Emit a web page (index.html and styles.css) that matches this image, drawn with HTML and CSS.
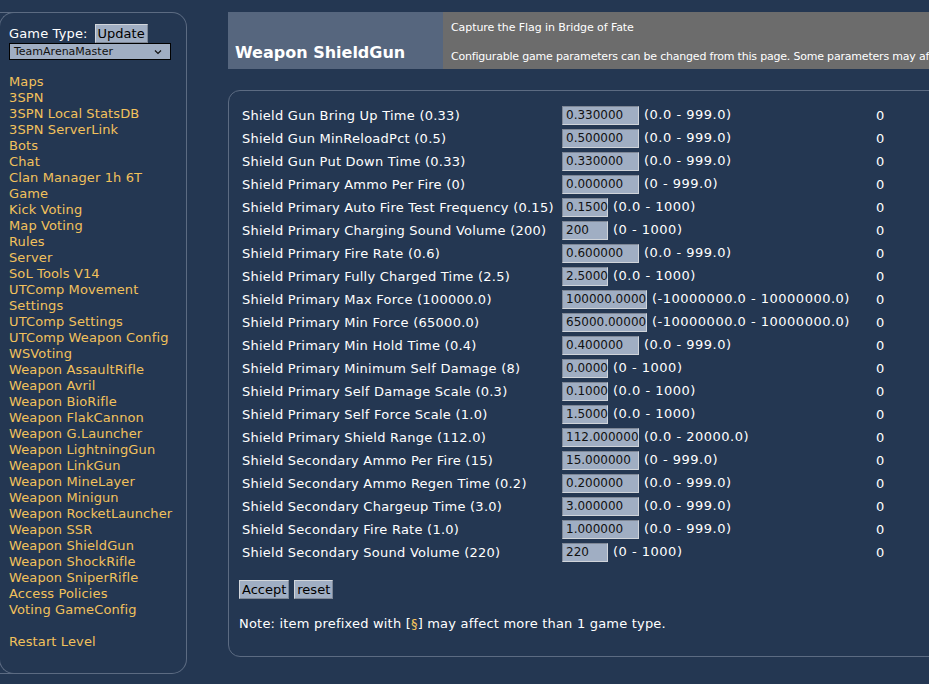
FILE: index.html
```html
<!DOCTYPE html>
<html>
<head>
<meta charset="utf-8">
<link rel="stylesheet" href="styles.css">
</head>
<body>
<div class="page">
  <aside class="sidebar">
    <div class="gt-row"><span class="gt-label">Game Type:</span><button class="btn">Update</button></div>
    <div class="select"><span>TeamArenaMaster</span><svg width="8" height="6" viewBox="0 0 8 6"><path d="M1 1.5 L4 4.5 L7 1.5" fill="none" stroke="#111" stroke-width="1.2"/></svg></div>
    <ul class="nav">
      <li><a>Maps</a></li>
      <li><a>3SPN</a></li>
      <li><a>3SPN Local StatsDB</a></li>
      <li><a>3SPN ServerLink</a></li>
      <li><a>Bots</a></li>
      <li><a>Chat</a></li>
      <li><a>Clan Manager 1h 6T</a></li>
      <li><a>Game</a></li>
      <li><a>Kick Voting</a></li>
      <li><a>Map Voting</a></li>
      <li><a>Rules</a></li>
      <li><a>Server</a></li>
      <li><a>SoL Tools V14</a></li>
      <li><a>UTComp Movement Settings</a></li>
      <li><a>UTComp Settings</a></li>
      <li><a>UTComp Weapon Config</a></li>
      <li><a>WSVoting</a></li>
      <li><a>Weapon AssaultRifle</a></li>
      <li><a>Weapon Avril</a></li>
      <li><a>Weapon BioRifle</a></li>
      <li><a>Weapon FlakCannon</a></li>
      <li><a>Weapon G.Launcher</a></li>
      <li><a>Weapon LightningGun</a></li>
      <li><a>Weapon LinkGun</a></li>
      <li><a>Weapon MineLayer</a></li>
      <li><a>Weapon Minigun</a></li>
      <li><a>Weapon RocketLauncher</a></li>
      <li><a>Weapon SSR</a></li>
      <li><a>Weapon ShieldGun</a></li>
      <li><a>Weapon ShockRifle</a></li>
      <li><a>Weapon SniperRifle</a></li>
      <li><a>Access Policies</a></li>
      <li><a>Voting GameConfig</a></li>
      <li class="spacer"></li>
      <li><a>Restart Level</a></li>
    </ul>
  </aside>
  <main class="main">
    <header class="head">
      <div class="title">Weapon ShieldGun</div>
      <div class="info">
        <div>Capture the Flag in Bridge of Fate</div>
        <div>Configurable game parameters can be changed from this page. Some parameters may affect more than one game type.</div>
      </div>
    </header>
    <section class="panel">
      <table class="params">
        <tr><td class="lbl">Shield Gun Bring Up Time (0.33)</td><td class="val"><span class="inp w77">0.330000</span>(0.0 - 999.0)</td><td class="num">0</td></tr>
        <tr><td class="lbl">Shield Gun MinReloadPct (0.5)</td><td class="val"><span class="inp w77">0.500000</span>(0.0 - 999.0)</td><td class="num">0</td></tr>
        <tr><td class="lbl">Shield Gun Put Down Time (0.33)</td><td class="val"><span class="inp w77">0.330000</span>(0.0 - 999.0)</td><td class="num">0</td></tr>
        <tr><td class="lbl">Shield Primary Ammo Per Fire (0)</td><td class="val"><span class="inp w77">0.000000</span>(0 - 999.0)</td><td class="num">0</td></tr>
        <tr><td class="lbl">Shield Primary Auto Fire Test Frequency (0.15)</td><td class="val"><span class="inp w46">0.1500</span>(0.0 - 1000)</td><td class="num">0</td></tr>
        <tr><td class="lbl">Shield Primary Charging Sound Volume (200)</td><td class="val"><span class="inp w46">200</span>(0 - 1000)</td><td class="num">0</td></tr>
        <tr><td class="lbl">Shield Primary Fire Rate (0.6)</td><td class="val"><span class="inp w77">0.600000</span>(0.0 - 999.0)</td><td class="num">0</td></tr>
        <tr><td class="lbl">Shield Primary Fully Charged Time (2.5)</td><td class="val"><span class="inp w46">2.5000</span>(0.0 - 1000)</td><td class="num">0</td></tr>
        <tr><td class="lbl">Shield Primary Max Force (100000.0)</td><td class="val"><span class="inp w85">100000.0000</span>(-10000000.0 - 10000000.0)</td><td class="num">0</td></tr>
        <tr><td class="lbl">Shield Primary Min Force (65000.0)</td><td class="val"><span class="inp w85">65000.00000</span>(-10000000.0 - 10000000.0)</td><td class="num">0</td></tr>
        <tr><td class="lbl">Shield Primary Min Hold Time (0.4)</td><td class="val"><span class="inp w77">0.400000</span>(0.0 - 999.0)</td><td class="num">0</td></tr>
        <tr><td class="lbl">Shield Primary Minimum Self Damage (8)</td><td class="val"><span class="inp w46">0.0000</span>(0 - 1000)</td><td class="num">0</td></tr>
        <tr><td class="lbl">Shield Primary Self Damage Scale (0.3)</td><td class="val"><span class="inp w46">0.1000</span>(0.0 - 1000)</td><td class="num">0</td></tr>
        <tr><td class="lbl">Shield Primary Self Force Scale (1.0)</td><td class="val"><span class="inp w46">1.5000</span>(0.0 - 1000)</td><td class="num">0</td></tr>
        <tr><td class="lbl">Shield Primary Shield Range (112.0)</td><td class="val"><span class="inp w77">112.000000</span>(0.0 - 20000.0)</td><td class="num">0</td></tr>
        <tr><td class="lbl">Shield Secondary Ammo Per Fire (15)</td><td class="val"><span class="inp w77">15.000000</span>(0 - 999.0)</td><td class="num">0</td></tr>
        <tr><td class="lbl">Shield Secondary Ammo Regen Time (0.2)</td><td class="val"><span class="inp w77">0.200000</span>(0.0 - 999.0)</td><td class="num">0</td></tr>
        <tr><td class="lbl">Shield Secondary Chargeup Time (3.0)</td><td class="val"><span class="inp w77">3.000000</span>(0.0 - 999.0)</td><td class="num">0</td></tr>
        <tr><td class="lbl">Shield Secondary Fire Rate (1.0)</td><td class="val"><span class="inp w77">1.000000</span>(0.0 - 999.0)</td><td class="num">0</td></tr>
        <tr><td class="lbl">Shield Secondary Sound Volume (220)</td><td class="val"><span class="inp w46">220</span>(0 - 1000)</td><td class="num">0</td></tr>
      </table>
      <div class="actions"><button class="btn">Accept</button><button class="btn">reset</button></div>
      <p class="note">Note: item prefixed with [<span class="sect">§</span>] may affect more than 1 game type.</p>
    </section>
  </main>
</div>
</body>
</html>
```
FILE: styles.css
```css
html, body {
  margin: 0;
  padding: 0;
  background: #243752;
  color: #ffffff;
  font-family: "DejaVu Sans", Verdana, sans-serif;
  font-size: 12px;
  overflow: hidden;
}
.page {
  display: flex;
  align-items: flex-start;
  padding-top: 12px;
  width: 929px;
  height: 684px;
  box-sizing: border-box;
}
.sidebar {
  flex: 0 0 auto;
  width: 187px;
  height: 662px;
  box-sizing: border-box;
  border: 1px solid #5c6b82;
  border-left: none;
  border-radius: 0 15px 15px 0;
  padding: 11px 0 0 9px;
  margin-right: 41px;
  position: relative;
}
.sidebar::before {
  content: "";
  position: absolute;
  left: 0;
  top: -1px;
  bottom: -1px;
  width: 15px;
  border: 1px solid #5c6b82;
  border-right: none;
  border-radius: 15px 0 0 15px;
  margin-left: -1px;
}
.gt-row {
  display: flex;
  align-items: center;
  height: 19px;
}
.gt-label {
  font-size: 13px;
  letter-spacing: 0.15px;
  margin-right: 7px;
}
.btn {
  font-family: "DejaVu Sans", Verdana, sans-serif;
  font-size: 13px;
  color: #000;
  background: #a0aec3;
  border: 1px solid #d2d6dc;
  border-right-color: #7e8796;
  border-bottom-color: #7e8796;
  padding: 0 2px;
  height: 19px;
  line-height: 17px;
  margin: 0;
}
.select {
  display: flex;
  align-items: center;
  justify-content: space-between;
  width: 162px;
  height: 17px;
  box-sizing: border-box;
  border: 1px solid #000;
  background: #a0aec3;
  color: #111;
  font-size: 11px;
  padding: 0 8px 0 4px;
}
.nav {
  list-style: none;
  margin: 14px 0 0 0;
  padding: 0;
}
.nav li {
  font-size: 13px;
  line-height: 16px;
  letter-spacing: 0.12px;
}
.nav li a {
  color: #f2c15c;
}
.nav li.spacer {
  height: 16px;
}
.main {
  flex: 1 1 auto;
  min-width: 0;
  overflow: hidden;
}
.head {
  display: flex;
  height: 57px;
  width: 900px;
}
.title {
  width: 215px;
  background: #56667e;
  font-weight: bold;
  font-size: 16px;
  padding: 0 0 7px 7px;
  box-sizing: border-box;
  display: flex;
  align-items: flex-end;
}
.info {
  flex: 1;
  background: #6c6c6c;
  font-size: 11px;
  letter-spacing: -0.2px;
  padding: 9px 0 0 8px;
  white-space: nowrap;
  overflow: hidden;
}
.info div:first-child {
  height: 29px;
  letter-spacing: -0.08px;
}
.panel {
  margin-top: 21px;
  width: 900px;
  height: 567px;
  box-sizing: border-box;
  border: 1px solid #5c6b82;
  border-radius: 12px 0 0 12px;
  padding: 13px 0 0 10px;
}
.params {
  border-collapse: collapse;
  table-layout: fixed;
}
.params td {
  padding: 0;
  height: 23px;
  font-size: 13px;
  white-space: nowrap;
}
.params td.lbl {
  width: 320px;
  padding-left: 3px;
  letter-spacing: 0.25px;
}
.val {
  width: 314px;
  letter-spacing: 0.5px;
}
.inp {
  display: inline-block;
  vertical-align: middle;
  height: 19px;
  line-height: 17px;
  box-sizing: border-box;
  background: #a0aec3;
  color: #111;
  border: 1px solid #d0d4da;
  border-top-color: #7e8796;
  border-left-color: #7e8796;
  padding: 0 3px;
  margin-right: 5px;
  font-size: 12px;
  letter-spacing: 0;
}
.w77 { width: 77px; }
.w46 { width: 46px; }
.w85 { width: 85px; }
.num {
  font-size: 13px;
}
.actions {
  margin-top: 16px;
  display: flex;
  gap: 5px;
}
.note {
  margin: 17px 0 0 0;
  font-size: 13px;
  letter-spacing: 0.2px;
}
.sect {
  color: #f2c15c;
}
```
